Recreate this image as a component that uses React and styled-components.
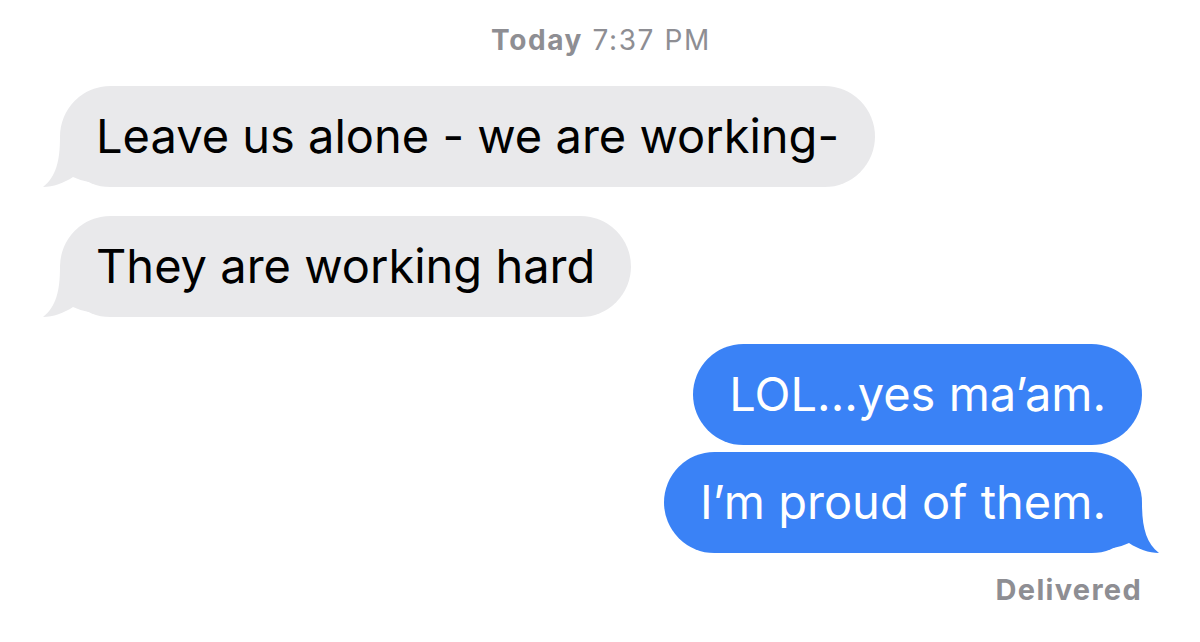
import React from 'react'
import styled, { createGlobalStyle } from 'styled-components'

const GlobalStyle = createGlobalStyle`
  html, body {
    margin: 0;
    padding: 0;
    background: #ffffff;
  }
  body {
    font-family: Inter, "Liberation Sans", Arial, sans-serif;
    -webkit-font-smoothing: antialiased;
  }
`

const GRAY = '#e9e9eb'
const BLUE = '#3a82f6'
const META = '#8e8e93'

const messages = [
  { id: 1, mine: false, text: 'Leave us alone - we are working-', tail: true, gap: 0 },
  { id: 2, mine: false, text: 'They are working hard', tail: true, gap: 29 },
  { id: 3, mine: true, text: 'LOL...yes ma\u2019am.', tail: false, gap: 27 },
  { id: 4, mine: true, text: 'I\u2019m proud of them.', tail: true, gap: 7 },
]

const Tail = ({ mine }) => (
  <TailSvg mine={mine} width='60' height='50' viewBox='0 0 60 50'>
    <path
      d='M17 0 C17 24, 13 40, 0 50 C10 50, 21 46, 30 40 C35 42, 40 44, 46 45 L46 0 Z'
      fill={mine ? BLUE : GRAY}
    />
  </TailSvg>
)

export default function App () {
  return (
    <Page>
      <GlobalStyle />
      <Stamp><b>Today</b> 7:37 PM</Stamp>
      <Thread>
        {messages.map(m => (
          <Row key={m.id} mine={m.mine} gap={m.gap}>
            <Bubble mine={m.mine}>
              {m.text}
              {m.tail && <Tail mine={m.mine} />}
            </Bubble>
          </Row>
        ))}
      </Thread>
      <Status>Delivered</Status>
    </Page>
  )
}

const Page = styled.div`
  width: 1200px;
  height: 642px;
  box-sizing: border-box;
  padding: 24px 58px 0 60px;
  display: flex;
  flex-direction: column;
  overflow: hidden;
`
const Stamp = styled.div`
  text-align: center;
  font-size: 28px;
  line-height: 32px;
  color: ${META};
  letter-spacing: 1.6px;
  & b {
    font-weight: 700;
  }
`
const Thread = styled.div`
  display: flex;
  flex-direction: column;
  margin-top: 30px;
`
const Row = styled.div`
  display: flex;
  justify-content: ${props => props.mine ? 'flex-end' : 'flex-start'};
  margin-top: ${props => props.gap}px;
`
const Bubble = styled.div`
  position: relative;
  display: inline-flex;
  align-items: center;
  height: 101px;
  box-sizing: border-box;
  padding: 0 36px 2px 36px;
  border-radius: 51px;
  font-size: 47px;
  letter-spacing: 0;
  white-space: nowrap;
  background: ${props => props.mine ? BLUE : GRAY};
  color: ${props => props.mine ? '#ffffff' : '#000000'};
`
const TailSvg = styled.svg`
  position: absolute;
  bottom: 0;
  ${props => props.mine ? 'right: -17px; transform: scaleX(-1);' : 'left: -17px;'}
  display: block;
`
const Status = styled.div`
  align-self: flex-end;
  margin-top: 20px;
  font-size: 29px;
  line-height: 34px;
  font-weight: 700;
  color: ${META};
  letter-spacing: 1.3px;
`
